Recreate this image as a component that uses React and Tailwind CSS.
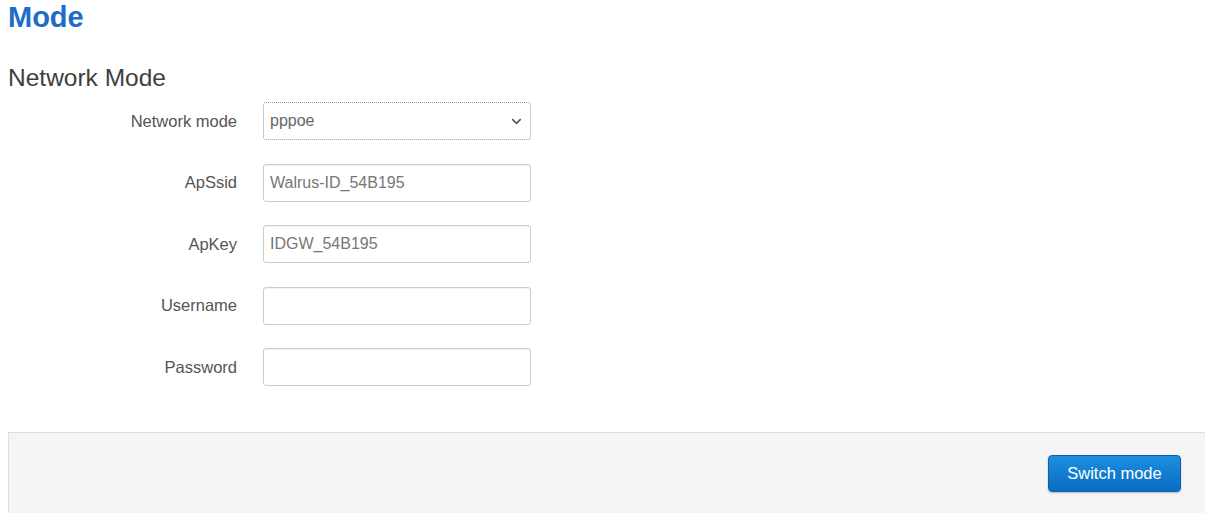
import { ChevronDown } from "lucide-react";

const fields = [
	{ label: "ApSsid", value: "Walrus-ID_54B195" },
	{ label: "ApKey", value: "IDGW_54B195" },
	{ label: "Username", value: "" },
	{ label: "Password", value: "", type: "password" },
];

export default function App() {
	return (
		<div className="bg-white min-h-[513px] pl-2 font-['Liberation_Sans',Arial,sans-serif]">
			<h2 className="text-[29px] leading-[34px] font-bold text-[#1c6dc9]">Mode</h2>

			<h3 className="text-[24.5px] leading-[28px] text-[#404040] mt-[30px]">Network Mode</h3>

			<div className="mt-[10px]">
				<div className="flex items-center h-[38px]">
					<label className="w-[229px] text-right text-[16.5px] text-[#555]">Network mode</label>
					<div className="ml-[26px] relative w-[268px] h-[38px] border border-dotted border-[#999] rounded-[3px] flex items-center">
						<span className="pl-[6px] text-[16px] text-[#666]">pppoe</span>
						<ChevronDown className="absolute right-[6px] w-[15px] h-[15px] text-[#555]" strokeWidth={2.5} />
					</div>
				</div>

				{fields.map((f) => (
					<div key={f.label} className="flex items-center h-[38px] mt-[23.5px]">
						<label className="w-[229px] text-right text-[16.5px] text-[#555]">{f.label}</label>
						<input
							type={f.type || "text"}
							defaultValue={f.value}
							className="ml-[26px] w-[268px] h-[38px] border border-[#ccc] rounded-[3px] px-[6px] text-[16px] text-[#777] outline-none shadow-[inset_0_1px_1px_rgba(0,0,0,0.06)]"
						/>
					</div>
				))}
			</div>

			<div className="mt-[46px] border-t border-l border-[#ddd] bg-[#f5f5f5] h-[81px] flex items-start justify-end pr-[24px] pt-[22px]">
				<button className="w-[133px] h-[37px] rounded-[4px] border border-[#0a5fae] bg-gradient-to-b from-[#1d8fdd] to-[#0a6bc3] text-white text-[16.5px] shadow-[0_1px_2px_rgba(0,0,0,0.25)]">
					Switch mode
				</button>
			</div>
		</div>
	);
}
